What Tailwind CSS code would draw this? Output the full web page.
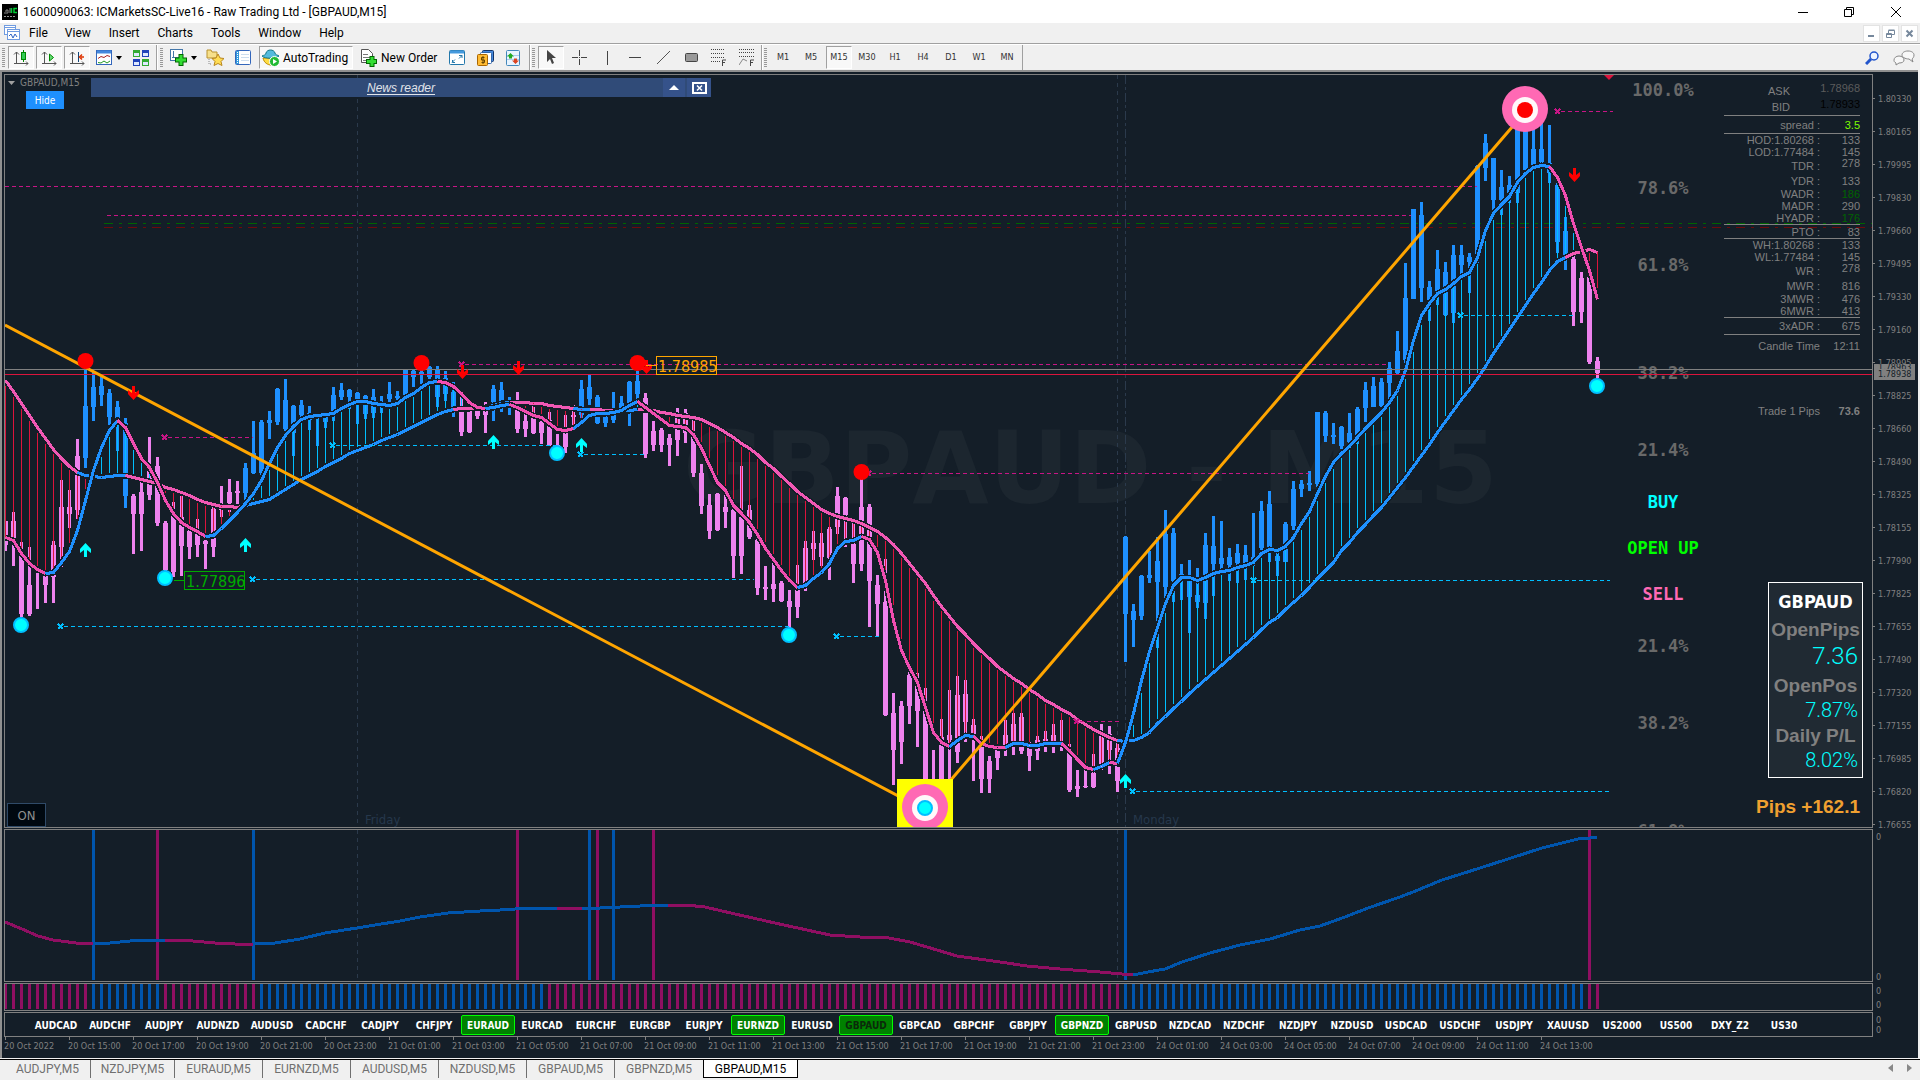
<!DOCTYPE html>
<html lang="en">
<head>
  <meta charset="UTF-8" />
  <meta name="viewport" content="width=device-width, initial-scale=1.0" />
  <title>1600090063: ICMarketsSC-Live16 - Raw Trading Ltd - [GBPAUD,M15]</title>
  <script src="https://cdn.jsdelivr.net/npm/@tailwindcss/browser@4"></script>
</head>
<body class="h-screen flex flex-col overflow-hidden bg-[#f0f0f0] text-black text-[12px] font-['Roboto','Open_Sans',sans-serif]">
  <!-- Title bar -->
  <header class="h-[23px] shrink-0 bg-white flex items-center justify-between">
    <div class="flex items-center gap-1 pl-[2px]">
      <svg width="16" height="16" viewBox="0 0 16 16"><rect width="16" height="16"/><path d="M2 9h4V6H4v2M8 4v5" stroke="#888" fill="none"/><path d="M9.500 4v5M15 4.500h-3v4h3" stroke="#0c3" stroke-width="1.500" fill="none"/><path d="M2 12.500h12" stroke="#999" stroke-dasharray="2 1"/></svg>
      <h1 class="pl-[1px] leading-4">1600090063: ICMarketsSC-Live16 - Raw Trading Ltd - [GBPAUD,M15]</h1>
    </div>
    <div class="flex">
      <button class="w-[46px] h-[22px] flex items-center justify-center" aria-label="Minimize"><svg width="10" height="10" stroke="#000"><path d="M0 5.500h10"/></svg></button>
      <button class="w-[46px] h-[22px] flex items-center justify-center" aria-label="Restore"><svg width="10" height="10" fill="none" stroke="#000"><path d="M.5 2.500h7v7h-7zM2.500 2.500v-2h7v7h-2"/></svg></button>
      <button class="w-[48px] h-[22px] flex items-center justify-center" aria-label="Close"><svg width="10" height="10" stroke="#000"><path d="M0 0l10 10M10 0L0 10"/></svg></button>
    </div>
  </header>

  <!-- Menu -->
  <nav class="h-[21px] shrink-0 flex items-center justify-between border-b border-[#a0a0a0]">
    <div class="flex items-center pl-1">
      <svg class="mr-[1px]" width="16" height="16" fill="none" stroke="#6f9be0"><rect x=".5" y=".5" width="11" height="9" fill="#fff"/><path d="M1 2.500h10"/><rect x="3.500" y="4.500" width="12" height="10" fill="#fff"/><path d="M4 6.500h11"/><path d="M5 11l2-2 2 4 2-4 2 3" stroke="#2b62c4"/></svg>
      <a href="#" class="px-[8px]">File</a>
      <a href="#" class="px-[9px]">View</a>
      <a href="#" class="px-[9px]">Insert</a>
      <a href="#" class="px-[9px]">Charts</a>
      <a href="#" class="px-[9px]">Tools</a>
      <a href="#" class="px-[9px]">Window</a>
      <a href="#" class="px-[9px]">Help</a>
    </div>
    <div class="flex gap-[2px] pr-[2px]">
      <button class="w-[17px] h-[17px] bg-white border border-[#e3e3e3] flex items-center justify-center" aria-label="Minimize chart"><svg width="9" height="9"><path d="M1 7h6" stroke="#76889c" stroke-width="2"/></svg></button>
      <button class="w-[17px] h-[17px] bg-white border border-[#e3e3e3] flex items-center justify-center" aria-label="Restore chart"><svg width="9" height="9" fill="none" stroke="#76889c"><path d="M.5 4.500h5v4h-5zM.5 5.500h5M2.500 4V1.500h6v4H6M2.500 1h6"/></svg></button>
      <button class="w-[17px] h-[17px] bg-white border border-[#e3e3e3] flex items-center justify-center" aria-label="Close chart"><svg width="9" height="9"><path d="M1.500 1.500l6 6M7.500 1.500l-6 6" stroke="#76889c" stroke-width="2"/></svg></button>
    </div>
  </nav>

  <!-- Toolbar -->
  <div class="h-[26px] shrink-0 flex items-center justify-between border-t border-white">
    <div class="flex items-center h-full">
      <div class="flex items-center h-full w-[157px] border-r border-[#a0a0a0] pl-[2px]">
        <svg class="w-[5px] shrink-0" width="5" height="20"><path d="M1.500 0v20" stroke="#999" stroke-width="3" stroke-dasharray="1 1"/></svg>
        <button class="w-[26px] h-[23px] mx-px flex items-center justify-center bg-[#f8f8f8] border border-[#a0a0a0] border-r-white border-b-white" aria-label="Candlesticks"><svg width="16" height="16" fill="none" stroke="#555"><path d="M3.500 2v12M1 4.500L3.500 2 6 4.500M1 13.500h14M13 11.500l2 2-2 2"/><path d="M10.500 0v12" stroke="#080"/><rect x="8.500" y="2.500" width="4" height="7" fill="#3c5" stroke="#080"/></svg></button>
        <button class="w-[26px] h-[23px] mx-px flex items-center justify-center bg-[#f8f8f8] border border-[#a0a0a0] border-r-white border-b-white" aria-label="Auto scroll"><svg width="16" height="16" fill="none" stroke="#555"><path d="M3.500 2v12M1 4.500L3.500 2 6 4.500M1 13.500h14M13 11.500l2 2-2 2"/><path d="M8.500 4v7l4-3.500z" fill="#6d7" stroke="#080"/></svg></button>
        <button class="w-[26px] h-[23px] mx-px flex items-center justify-center bg-[#f8f8f8] border border-[#a0a0a0] border-r-white border-b-white" aria-label="Chart shift"><svg width="16" height="16" fill="none" stroke="#555"><path d="M3.500 2v12M1 4.500L3.500 2 6 4.500M1 13.500h14M13 11.500l2 2-2 2"/><path d="M9.500 2v10" stroke="#147"/><path d="M15 7h-3M13 4.500L10.500 7 13 9.500" stroke="#d30" stroke-width="1.500"/></svg></button>
        <button class="w-9 flex items-center justify-center gap-1" aria-label="Indicators"><svg width="16" height="16" fill="none"><rect x=".5" y=".5" width="15" height="14" fill="#fff" stroke="#36b"/><path d="M1 2h14" stroke="#48d" stroke-width="3"/><path d="M2 8.500l3-2 3 1 3-2 3 1" stroke="#a22"/><path d="M2 12.500l3 .5 3-2 3 2 3-2" stroke="#292"/></svg><svg width="6" height="4"><path d="M0 0h6L3 4z"/></svg></button>
        <button class="w-7 flex justify-center" aria-label="Tile windows"><svg width="16" height="16"><path d="M0 0h7v7H0zM9 9h7v7H9z" fill="#3a3"/><path d="M9 0h7v7H9zM0 9h7v7H0z" fill="#24b"/><path d="M1 3h5v3H1zM10 3h5v3h-5zM1 12h5v3H1zM10 12h5v3h-5z" fill="#dfe9ff"/></svg></button>
      </div>
      <div class="flex items-center h-full w-[373px] border-l border-l-white border-r border-r-[#a0a0a0] pl-[2px]">
        <svg class="w-[5px] shrink-0" width="5" height="20"><path d="M1.500 0v20" stroke="#999" stroke-width="3" stroke-dasharray="1 1"/></svg>
        <button class="w-9 flex items-center justify-center gap-1" aria-label="New chart"><svg width="17" height="17" fill="none"><rect x=".5" y=".5" width="12" height="11" fill="#fff" stroke="#47a"/><path d="M3.500 2v7M2 8.500h8" stroke="#47a"/><path d="M11 5v12M5 11h12" stroke="#060" stroke-width="5"/><path d="M11 6v10M6 11h10" stroke="#3d3" stroke-width="3"/></svg><svg width="6" height="4"><path d="M0 0h6L3 4z"/></svg></button>
        <button class="w-7 flex justify-center" aria-label="Profiles"><svg width="18" height="17"><path d="M1 1h4l1 2h5v6H1z" fill="#f7e08a" stroke="#b8912e"/><path d="M3 10v5h3" fill="none" stroke="#888" stroke-dasharray="1 1"/><path d="M12 5l2 4 4 .5-3 3 1 4-4-2-4 2 1-4-3-3 4-.5z" fill="#fd5" stroke="#b8861e"/></svg></button>
        <button class="w-7 flex justify-center" aria-label="Market watch"><svg width="16" height="16"><rect x=".5" y=".5" width="15" height="14" rx="1" fill="#fff" stroke="#36b"/><path d="M1 1h3v13H1z" fill="#39d"/><path d="M2.500 2v12" stroke="#fff" stroke-dasharray="1 1"/><path d="M6 4.500h8M6 7.500h8M6 10.500h8" stroke="#cde"/></svg></button>
        <button class="w-[94px] h-[23px] ml-[2px] flex items-center gap-[3px] pl-[2px] bg-[#f8f8f8] border border-[#a0a0a0] border-r-white border-b-white whitespace-nowrap"><svg class="shrink-0" width="18" height="18"><path d="M1 9c1 5 5 7 8 7s7-3 7-7z" fill="#fd4" stroke="#b80"/><path d="M0 7c2-1 4-1 4-3 1-4 8-4 9 0 0 2 3 2 4 3-3 3-14 3-17 0z" fill="#5bd" stroke="#178"/><circle cx="12.500" cy="12.500" r="5" fill="#2b3" stroke="#fff"/><path d="M11 10v5l4-2.500z" fill="#fff"/></svg>AutoTrading</button>
        <button class="w-[90px] flex items-center gap-1 pl-2 whitespace-nowrap"><svg class="shrink-0" width="16" height="18"><path d="M.5.5h7l4 4v9H.5z" fill="#fff" stroke="#555"/><path d="M2 5.500h5M2 8.500h7M2 11.500h4" stroke="#777"/><path d="M11 7v11M5 12.500h11" stroke="#060" stroke-width="5"/><path d="M11 8v9M6 12.500h9" stroke="#3d3" stroke-width="3"/></svg>New Order</button>
        <button class="w-7 flex justify-center" aria-label="Full screen"><svg width="16" height="16"><rect x=".5" y=".5" width="15" height="14" rx="1" fill="#fff" stroke="#27a"/><path d="M1 2h14" stroke="#49d" stroke-width="3"/><path d="M3 12.500l3-3M3.500 10v2.500H6M13 5.500l-3 3M10 5.500h3V8" stroke="#27a" fill="none"/></svg></button>
        <button class="w-7 flex justify-center" aria-label="Options"><svg width="17" height="16"><rect x="5.500" y=".5" width="11" height="11" rx="1" fill="#48d" stroke="#136"/><rect x="3.500" y="2.500" width="11" height="11" rx="1" fill="#fff" stroke="#36a"/><rect x=".5" y="4.500" width="10" height="11" rx="1" fill="#fb3" stroke="#a60"/><path d="M7.500 7.500h-3v2.500h3v2.500h-3M6 6v8" fill="none" stroke="#640"/></svg></button>
        <button class="w-7 flex justify-center" aria-label="Tester"><svg width="14" height="16"><rect x=".5" y=".5" width="13" height="15" rx="1" fill="#e8f4ff" stroke="#48b"/><path d="M1 5.500h12M1 9.500h12" stroke="#ace"/><path d="M4.500 3L8 6.500H6v2H3v-2H1z" fill="#2a2"/><path d="M9.500 14L6 10.500h2v-2h3v2h2z" fill="#d42"/></svg></button>
      </div>
      <div class="flex items-center h-full w-[232px] border-l border-l-white border-r border-r-[#a0a0a0] pl-px">
        <svg class="w-[5px] shrink-0" width="5" height="20"><path d="M1.500 0v20" stroke="#999" stroke-width="3" stroke-dasharray="1 1"/></svg>
        <button class="w-[26px] h-[23px] mx-px flex items-center justify-center bg-[#f8f8f8] border border-[#a0a0a0] border-r-white border-b-white" aria-label="Cursor"><svg width="10" height="16"><path d="M1 0v12l3-3 2 5 2-1-2-5h4z" fill="#444"/></svg></button>
        <button class="w-7 flex justify-center" aria-label="Crosshair"><svg width="15" height="15" stroke="#444"><path d="M7.500 0v6M7.500 9v6M0 7.500h6M9 7.500h6M7 7.500h1"/></svg></button>
        <button class="w-7 flex justify-center" aria-label="Vertical line"><svg width="3" height="14" stroke="#444"><path d="M1.500 0v14"/></svg></button>
        <button class="w-7 flex justify-center" aria-label="Horizontal line"><svg width="12" height="3" stroke="#444"><path d="M0 1.500h12"/></svg></button>
        <button class="w-7 flex justify-center" aria-label="Trendline"><svg width="13" height="13" stroke="#555"><path d="M0 13L13 0"/></svg></button>
        <button class="w-7 flex justify-center" aria-label="Rectangle"><svg width="13" height="9"><rect x=".5" y=".5" width="12" height="8" rx="1" fill="#999" stroke="#444"/></svg></button>
        <button class="w-7 flex justify-center" aria-label="Fibonacci retracement"><svg width="16" height="17" stroke="#444" fill="none"><path d="M0 .5h14M0 4.500h14M0 8.500h14M0 12.500h9" stroke-dasharray="1 1"/><path d="M11.500 17v-6H15M11 13.500h3"/></svg></button>
        <button class="w-7 flex justify-center" aria-label="Fibonacci fan"><svg width="16" height="17" stroke="#444" fill="none"><path d="M0 .5h15M0 3.500h15M0 7.500h15" stroke-dasharray="1 1"/><path d="M0 16l4-6 4 2" stroke="#888"/><path d="M11.500 17v-6H15M11 13.500h3"/></svg></button>
      </div>
      <div class="flex items-center h-full w-[261px] border-l border-l-white border-r border-r-[#a0a0a0] pl-px text-[9px] text-[#333] font-['DejaVu_Sans_Condensed','DejaVu_Sans',sans-serif]">
        <svg class="w-[5px] shrink-0" width="5" height="20"><path d="M1.500 0v20" stroke="#999" stroke-width="3" stroke-dasharray="1 1"/></svg>
        <button class="w-7">M1</button>
        <button class="w-7">M5</button>
        <button class="w-[26px] h-[23px] mx-px bg-[#f8f8f8] border border-[#a0a0a0] border-r-white border-b-white">M15</button>
        <button class="w-7">M30</button>
        <button class="w-7">H1</button>
        <button class="w-7">H4</button>
        <button class="w-7">D1</button>
        <button class="w-7">W1</button>
        <button class="w-7">MN</button>
      </div>
    </div>
    <div class="flex items-center gap-[14px] pr-[5px]">
      <button aria-label="Search"><svg width="14" height="14" fill="none"><path d="M1 13l5-5" stroke="#25c" stroke-width="3"/><circle cx="9" cy="5" r="4" fill="#eef4ff" stroke="#25c" stroke-width="1.500"/></svg></button>
      <button aria-label="Chat"><svg width="22" height="16" fill="#f8f8f8" stroke="#888"><path d="M15 1c4 0 6 2 6 4s-1 3-2 4l1 3-4-3c-4 0-7-2-7-4s2-4 6-4z"/><path d="M6 6c3 0 5 2 5 4s-2 3-5 3l-3 2v-2c-2-1-2-2-2-3 0-2 2-4 5-4z"/></svg></button>
    </div>
  </div>

  <!-- Chart window -->
  <main class="flex-1 min-h-0 mr-[2px] border-l-2 border-t-2 border-[#909090] bg-[#141e28] pt-[2px] pl-[2px] flex text-[#808080]">
    <div class="flex-1 min-w-0 flex flex-col gap-px">
      <!-- Price panel -->
      <section class="relative flex-1 min-h-0 border border-[#808080] overflow-hidden">
        <svg id="priceChart" class="absolute inset-0 w-full h-full"></svg>

        <div class="absolute left-[3px] top-[2px] flex items-center gap-[5px] text-[10px] leading-3 font-['DejaVu_Sans_Condensed','DejaVu_Sans',sans-serif]">
          <svg width="7" height="4"><path d="M0 0h7L3.500 4z" fill="#a0a0a0"/></svg>GBPAUD,M15
        </div>
        <button class="absolute left-[21px] top-4 w-[38px] h-[18px] bg-[#1e90ff] text-white text-[10px] font-['DejaVu_Sans_Condensed','DejaVu_Sans',sans-serif]">Hide</button>

        <div class="absolute left-[86px] top-[3px] w-[620px] h-[19px] bg-[#304b78] flex items-center justify-center text-[#e0e4ea] font-['Liberation_Sans',Arial,sans-serif]">
          <span class="italic underline underline-offset-2">News reader</span>
          <div class="absolute right-0 top-0 h-full flex gap-[2px]">
            <button class="w-[22px] bg-[#35528a] flex items-center justify-center" aria-label="Collapse"><svg width="10" height="5"><path d="M0 5h10L5 0z" fill="#fff"/></svg></button>
            <button class="w-[24px] bg-[#35528a] flex items-center justify-center" aria-label="Close news"><svg width="15" height="12" fill="none" stroke="#fff"><rect x="1" y="1" width="13" height="10" stroke-width="2"/><path d="M5 3.500l5 5M10 3.500l-5 5" stroke-width="1.500"/></svg></button>
          </div>
        </div>

        <button class="absolute left-[2px] bottom-0 w-[39px] h-6 bg-[#000810] border border-[#2f4a68] text-[#909090] text-[13px] leading-none font-['DejaVu_Sans_Condensed','DejaVu_Sans',sans-serif]">ON</button>

        <!-- Market information -->
        <div class="absolute right-3 top-[7px] w-[136px] text-[11px] leading-3 font-['Liberation_Sans',Arial,sans-serif]">
          <div class="flex justify-end items-start h-4">
            <span class="w-[66px] text-right pt-[3px]">ASK</span><span class="w-[70px] text-right text-[#5c5c5c]">1.78968</span>
          </div>
          <div class="flex justify-end items-start h-[17px]">
            <span class="w-[66px] text-right pt-[3px]">BID</span><span class="w-[70px] text-right text-black">1.78933</span>
          </div>
          <table class="w-full text-right border-collapse leading-[10px]">
            <tbody id="ranges"></tbody>
          </table>
          <div class="flex border-t border-[#808080] pt-[5px]">
            <span class="w-24 text-right">Candle Time</span><span class="w-10 text-right">12:11</span>
          </div>
          <div class="flex pt-[53px]">
            <span class="w-24 text-right">Trade 1 Pips</span><span class="w-10 text-right font-bold">73.6</span>
          </div>
        </div>

        <!-- Position summary -->
        <div class="absolute right-[9px] bottom-[49px] w-[95px] h-[196px] border border-white bg-[#202a33] px-1 pt-1 text-[19px] leading-6 text-right font-bold font-['Liberation_Sans',Arial,sans-serif]">
          <p class="h-[31px] text-[18px] leading-[30px] text-center text-white font-['DejaVu_Sans_Condensed','DejaVu_Sans',sans-serif]">GBPAUD</p>
          <p class="-mx-1 text-center">OpenPips</p>
          <p class="h-8 text-[24px] leading-7 font-light text-[#00ffff] font-['Roboto',sans-serif]">7.36</p>
          <p class="text-center">OpenPos</p>
          <p class="h-[26px] text-[20px] leading-6 font-light text-[#00ffff] font-['Roboto',sans-serif]">7.87%</p>
          <p class="text-center">Daily P/L</p>
          <p class="text-[20px] leading-6 font-light text-[#00ffff] font-['Roboto',sans-serif]">8.02%</p>
        </div>
        <p class="absolute right-3 bottom-2 text-[19px] leading-6 font-bold text-[#f0a030] font-['Liberation_Sans',Arial,sans-serif]">Pips +162.1</p>
      </section>

      <!-- Trend line panel -->
      <section class="h-[153px] shrink-0 border border-[#808080]">
        <svg id="trendChart" class="block w-full h-full"></svg>
      </section>

      <!-- Trend histogram -->
      <section class="h-7 shrink-0 border border-[#808080]">
        <svg id="trendBars" class="block w-full h-full"></svg>
      </section>

      <!-- Symbols -->
      <section id="symbols" class="h-[25px] shrink-0 border border-[#808080] pl-6 pt-px flex items-center text-white text-[10px] font-bold font-['DejaVu_Sans_Condensed','DejaVu_Sans',sans-serif]"></section>

      <div id="timeAxis" class="-mt-px h-[21px] shrink-0 flex text-[9px] leading-3 whitespace-nowrap overflow-hidden font-['DejaVu_Sans_Condensed','DejaVu_Sans',sans-serif]"></div>
    </div>

    <!-- Price axis -->
    <aside class="w-[45px] shrink-0 flex flex-col text-[9px] leading-3 font-['DejaVu_Sans_Condensed','DejaVu_Sans',sans-serif]">
      <div class="relative flex-1 min-h-0 overflow-hidden pt-2">
        <div id="priceAxis"></div>
        <div class="absolute left-px top-[290px] w-[41px] h-4 bg-[#808080] text-[#141e28] pl-1 overflow-hidden">
          <p class="h-[5px] leading-[6px] overflow-hidden">1.78963</p>
          <p class="leading-[11px]">1.78938</p>
        </div>
      </div>
      <div class="h-[154px] shrink-0 pl-[3px] pt-[2px] flex flex-col justify-between"><p>0</p><p>0</p></div>
      <div class="h-7 shrink-0 pl-[3px] pt-[2px] flex flex-col justify-between"><p>0</p><p>0</p></div>
      <div class="h-[25px] shrink-0 pl-[3px] pt-[4px] leading-[10px]"><p>0</p><p>0</p></div>
      <div class="h-[22px] shrink-0"></div>
    </aside>
  </main>

  <!-- Chart tabs -->
  <footer class="h-[21px] shrink-0 flex justify-between border-t border-t-black bg-[#f0f0f0] text-[#707070] mt-px">
    <div class="flex pl-[5px]">
      <a href="#" class="w-[86px] h-[18px] text-center leading-[18px] border-r border-[#707070]">AUDJPY,M5</a>
      <a href="#" class="w-[84px] h-[18px] text-center leading-[18px] border-r border-[#707070]">NZDJPY,M5</a>
      <a href="#" class="w-[88px] h-[18px] text-center leading-[18px] border-r border-[#707070]">EURAUD,M5</a>
      <a href="#" class="w-[88px] h-[18px] text-center leading-[18px] border-r border-[#707070]">EURNZD,M5</a>
      <a href="#" class="w-[88px] h-[18px] text-center leading-[18px] border-r border-[#707070]">AUDUSD,M5</a>
      <a href="#" class="w-[88px] h-[18px] text-center leading-[18px] border-r border-[#707070]">NZDUSD,M5</a>
      <a href="#" class="w-[88px] h-[18px] text-center leading-[18px] border-r border-[#707070]">GBPAUD,M5</a>
      <a href="#" class="w-[88px] h-[18px] text-center leading-[18px]">GBPNZD,M5</a>
      <a href="#" class="w-[95px] h-[18px] text-center leading-[18px] bg-white text-black border border-t-0 border-black">GBPAUD,M15</a>
    </div>
    <div class="flex items-center gap-[14px] pr-2 pb-1">
      <button aria-label="Previous tab"><svg width="5" height="8"><path d="M5 0v8L0 4z" fill="#888"/></svg></button>
      <button aria-label="Next tab"><svg width="5" height="8"><path d="M0 0v8l5-4z" fill="#888"/></svg></button>
    </div>
  </footer>

  <script>
    const BLUE = "#1e90ff", VIOLET = "#ee82ee", BG = "#141e28";
    const barX = (i) => 5 + i * 8;

    // high, body top, body bottom, low
    const candles = [
      [521,521,545,551],[512,521,538,566],[542,556,614,617],[547,585,614,616],[573,586,586,609],[575,576,585,603],[541,545,577,603],[480,507,547,567],[490,507,514,528],[439,456,510,519],
      [369,406,458,468],[372,387,407,421],[377,386,395,406],[389,393,417,425],[401,407,420,451],[418,423,496,508],[494,496,514,554],[481,492,514,551],[437,471,495,500],[457,466,523,526],
      [521,523,570,572],[502,515,572,577],[496,517,546,576],[529,531,547,559],[519,534,545,557],[540,541,544,569],[507,509,547,557],[486,508,510,517],[479,492,503,512],[481,491,493,504],
      [463,468,493,500],[421,453,473,474],[420,422,473,475],[411,420,423,439],[388,389,422,425],[379,400,429,431],[405,406,433,456],[400,405,415,417],[406,413,420,430],[417,417,417,446],
      [412,417,422,428],[387,395,415,421],[383,390,397,400],[389,390,397,409],[392,393,405,424],[395,396,414,419],[389,397,413,418],[396,402,407,413],[382,394,399,402],[391,396,398,400],
      [369,370,395,397],[370,371,377,387],[370,372,375,384],[366,367,377,379],[366,369,397,407],[371,378,394,401],[382,392,407,417],[397,412,432,436],[406,411,432,433],[410,410,416,419],
      [402,411,415,433],[385,389,402,421],[382,390,401,412],[397,398,398,415],[392,410,429,433],[413,421,429,437],[404,417,433,434],[420,422,433,444],[412,420,445,446],[434,445,447,447],
      [415,433,447,453],[405,415,417,426],[380,389,415,418],[374,387,399,405],[395,397,423,424],[416,417,423,427],[392,408,420,423],[396,403,409,413],[381,382,407,426],[371,381,394,399],
      [393,398,454,458],[421,431,445,451],[428,430,445,452],[434,438,445,466],[408,417,440,456],[409,413,433,443],[418,432,473,477],[464,473,506,514],[494,505,531,539],[493,494,530,531],
      [494,507,512,528],[508,510,556,578],[466,517,556,574],[505,510,537,539],[537,540,588,595],[566,587,589,600],[562,584,589,602],[581,583,601,602],[590,601,607,630],[565,590,607,618],
      [541,548,587,591],[531,543,549,560],[533,543,557,566],[527,529,558,580],[487,496,527,534],[497,498,515,547],[523,544,564,583],[477,507,564,571],[504,507,581,627],[575,585,604,637],
      [559,602,715,716],[693,713,750,785],[701,706,742,764],[670,675,706,724],[673,683,711,747],[688,705,779,779],[750,779,779,779],[719,737,779,779],[690,735,740,779],[676,695,752,763],
      [680,694,722,742],[719,725,735,781],[736,745,779,793],[756,761,779,793],[748,750,758,770],[720,735,750,756],[713,724,742,755],[713,717,751,754],[742,748,756,771],[736,740,751,760],
      [731,739,742,752],[724,735,747,753],[720,747,747,751],[744,748,790,792],[770,786,789,797],[770,786,787,788],[754,773,787,788],[724,735,766,770],[726,734,750,774],[743,748,781,792],
      [536,537,614,662],[604,611,620,647],[575,576,616,620],[551,575,578,583],[537,561,582,648],[510,534,587,598],[528,533,581,602],[564,574,577,600],[560,580,597,633],[568,595,602,608],
      [533,545,603,619],[516,546,564,596],[521,558,564,569],[548,557,565,581],[544,553,563,583],[545,555,563,580],[513,557,563,566],[501,511,548,550],[491,504,547,562],[551,556,561,576],
      [522,524,562,562],[481,489,526,530],[480,484,489,497],[471,483,485,491],[412,412,484,487],[411,413,436,442],[423,435,437,444],[426,427,446,449],[413,433,442,443],[407,409,438,444],
      [382,390,408,422],[377,386,407,407],[378,382,406,407],[362,368,383,400],[331,351,373,375],[263,298,360,365],[209,209,299,299],[202,215,288,302],[281,287,300,321],[250,269,295,305],
      [262,272,315,316],[245,255,313,323],[245,255,265,274],[253,257,262,293],[165,166,258,263],[134,143,168,181],[158,158,200,212],[170,187,200,215],[176,185,193,203],[125,125,193,203],
      [125,125,170,172],[125,149,165,168],[120,149,162,165],[125,163,173,183],[181,185,242,253],[217,231,260,270],[256,259,312,326],[272,278,312,323],[275,277,362,364],[357,361,373,378]
    ];
    // bars on which the candle colour flips, starting with violet
    const candleFlips = [10, 16, 30, 57, 61, 64, 72, 80, 140, 196];

    const fast = [
      537,540,553,563,569,573,572,562,551,530,500,470,447,430,420,427,443,458,467,482,
      500,513,522,527,531,536,535,528,520,512,503,493,480,463,447,435,426,419,416,415,
      414,413,408,404,401,401,403,404,405,403,397,393,387,382,381,382,386,393,402,407,
      408,407,405,404,407,411,415,417,423,429,430,428,422,415,413,413,412,410,405,401,
      407,413,419,425,426,427,434,448,465,482,490,505,513,522,534,548,559,570,580,587,
      585,578,572,563,548,541,540,536,539,552,580,620,650,667,682,707,732,742,746,740,
      735,736,743,746,747,747,743,743,745,745,743,743,743,750,759,767,769,766,762,763,
      742,713,680,651,627,603,585,577,577,580,577,573,571,570,567,565,562,553,549,550,
      546,537,523,511,493,476,462,453,446,437,428,420,412,402,390,370,340,315,303,293,
      289,283,276,272,257,230,213,204,196,182,173,167,165,166,177,195,223,247,270,299
    ];
    const fastFlips = [5, 14, 25, 54, 60, 63, 71, 79, 99, 107, 118, 121, 125, 132, 136, 138, 139, 193];

    const slow = [
      380,391,403,415,427,438,449,458,466,472,475,476,477,476,475,475,477,479,481,483,
      487,489,492,495,499,502,504,506,506,507,505,503,501,499,494,489,484,479,475,471,
      466,462,458,453,450,447,444,440,437,434,430,426,422,418,414,411,409,408,408,407,
      407,405,403,402,402,402,403,403,405,406,407,408,409,409,409,410,410,410,410,409,
      409,410,412,413,415,416,417,419,423,427,432,437,443,448,454,462,468,476,483,491,
      497,503,509,513,516,518,520,523,527,531,537,544,553,563,573,583,595,606,616,626,
      634,643,651,658,666,672,678,683,689,694,700,704,709,713,719,724,729,733,737,740,
      741,740,737,732,723,716,708,701,693,686,679,672,665,658,651,644,637,629,622,617,
      609,602,595,587,578,570,562,550,542,532,524,515,507,497,487,477,466,455,444,432,
      421,410,399,389,378,366,353,341,329,317,305,293,282,270,261,257,253,251,249,252
    ];
    const slowFlips = [9, 15, 30, 56, 60, 63, 71, 73, 76, 79, 139, 195];

    // x1, x2, y, colour, marker at the start
    const levels = [
      [5,1477,186,"#c71585",false],[107,1411,215,"#c71585",false],[1557,1613,111,"#c71585",true],[164,253,437,"#c71585",true],
      [461,1389,364,"#c71585",true],[868,1309,473,"#c71585",true],[1076,1122,721,"#c71585",true],
      [332,557,445,"#00bfff",true],[252,754,579,"#00bfff",true],[60,790,626,"#00bfff",true],[580,645,454,"#00bfff",true],
      [836,882,636,"#00bfff",true],[1253,1610,580,"#00bfff",true],[1132,1610,791,"#00bfff",true],[1460,1573,315,"#00bfff",true]
    ];

    const line = (x1, y1, x2, y2, color, width = 1, dash = "") =>
      `<line x1="${x1}" y1="${y1}" x2="${x2}" y2="${y2}" stroke="${color}" stroke-width="${width}" stroke-dasharray="${dash}"/>`;

    // splits an average into runs of falling and rising colour
    function average(values, flips, falling, rising) {
      const stops = [0, ...flips, values.length - 1];
      const points = (a, b) => values.slice(a, b + 1).map((y, i) => `${barX(a + i) + 0.5},${y + 0.5}`).join(" ");
      let out = `<polyline points="${points(0, values.length)}" fill="none" stroke="${BG}" stroke-width="6"/>`;
      for (let i = 0; i < stops.length - 1; i++) {
        out += `<polyline points="${points(stops[i], stops[i + 1])}" fill="none" stroke="${i % 2 ? rising : falling}" stroke-width="3"/>`;
      }
      return out;
    }

    const arrowDown = (x, y) => `<path d="M${x - 1} ${y - 7}h3v7l4-3v4l-5.500 6-5.500-6v-4l4 3z" fill="#f00"/>`;
    const arrowUp = (x, y) => `<path d="M${x - 1} ${y + 6}h3v-7l4 3v-4l-5.500-6-5.500 6v4l4-3z" fill="#0ff"/>`;
    const redDot = ([x, y]) => `<circle cx="${x + 0.5}" cy="${y}" r="8" fill="#f00"/>`;
    const cyanDot = ([x, y]) => `<circle cx="${x}" cy="${y}" r="7" fill="#0ff" stroke="#00bfff" stroke-width="2"/>`;

    function drawPrice() {
      let s = `<text class="[font-kerning:none]" x="683" y="503" font-size="99" font-weight="bold" font-family="DejaVu Sans" fill="#1c262f">GBPAUD - M15</text>`;

      const zones = [["100.0%",90],["78.6%",188],["61.8%",265],["38.2%",373],["21.4%",450],["BUY",502,"#0ff"],["OPEN UP",548,"#0f0"],["SELL",594,"#ff69b4"],["21.4%",646],["38.2%",723],["61.8%",831]];
      zones.forEach(([label, y, color]) => {
        s += `<text x="1663" y="${y + 6}" text-anchor="middle" font-size="17" font-weight="bold" font-family="DejaVu Sans Mono" fill="${color || "#696969"}">${label}</text>`;
      });
      s += `<text x="365" y="824" font-size="13" font-family="DejaVu Sans Condensed, DejaVu Sans" fill="#26384c">Friday</text>`;
      s += `<text x="1133" y="824" font-size="13" font-family="DejaVu Sans Condensed, DejaVu Sans" fill="#26384c">Monday</text>`;

      s += `<g shape-rendering="crispEdges">`;
      s += line(357.5, 75, 357.5, 828, "#2b3a4c", 1, "4 4") + line(1117.5, 75, 1117.5, 828, "#2b3a4c", 1, "4 4") + line(1125.5, 75, 1125.5, 828, "#2b3a4c", 1, "9 3 3 3");
      s += line(104, 223.5, 1873, 223.5, "#006400", 1, "9 6 3 6") + line(104, 227.5, 1873, 227.5, "#6e0a0a", 1, "9 6 3 6");

      let color = VIOLET;
      candles.forEach(([high, top, bottom, low], i) => {
        if (candleFlips.includes(i)) color = color === VIOLET ? BLUE : VIOLET;
        const x = barX(i);
        s += `<rect x="${x - 1}" y="${high}" width="3" height="${low - high}" fill="${color}"/>`;
        s += `<rect x="${x - 2}" y="${top}" width="5" height="${bottom - top}" fill="${color}"/>`;
      });
      fast.forEach((y, i) => {
        s += line(barX(i) + 0.5, y, barX(i) + 0.5, slow[i], y > slow[i] ? "#dc143c" : "#00bfff");
      });
      s += average(slow, slowFlips, "#f158b4", BLUE);
      s += average(fast, fastFlips, "#f04db0", BLUE);

      levels.forEach(([x1, x2, y, c, marker]) => {
        s += line(marker ? x1 + 4 : x1, y + 0.5, x2, y + 0.5, c, 1, "4 3");
        if (marker) s += `<path d="M${x1 - 2} ${y - 2}l5 5m0-5l-5 5" stroke="${c}" stroke-width="2"/>`;
      });
      s += line(5, 369.5, 1873, 369.5, "#808080") + line(5, 374.5, 1873, 374.5, "#dc143c");
      s += `</g>`;

      s += `<polyline points="5,325 925,810 1525,112" fill="none" stroke="#ffa500" stroke-width="3"/>`;
      s += [[133,393],[462,372],[518,368],[646,367],[1574,175]].map(([x, y]) => arrowDown(x, y)).join("");
      s += [[85,551],[245,546],[493,443],[581,446],[1125,782]].map(([x, y]) => arrowUp(x, y)).join("");
      s += [[85,361],[421,363],[637,363],[861,472]].map(redDot).join("");
      s += [[21,625],[165,578],[557,453],[789,635],[1597,386]].map(cyanDot).join("");

      s += `<circle cx="1525" cy="109" r="23" fill="#ff69b4"/><circle cx="1525" cy="110" r="13" fill="#fff8fa"/><circle cx="1525" cy="110" r="8" fill="#f00"/>`;
      s += `<rect x="897" y="779" width="56" height="49" fill="#ff0"/><circle cx="925" cy="807" r="23" fill="#ff69b4"/><circle cx="925" cy="808" r="13" fill="#fff8fa"/>` + cyanDot([925, 808]);

      s += line(646, 365.5, 656, 365.5, "#ffa500") + `<rect x="656.5" y="356.5" width="60" height="18" fill="none" stroke="#ffa500"/><text x="658" y="372" font-size="16" font-family="DejaVu Sans Condensed, DejaVu Sans" fill="#ffa500">1.78985</text>`;
      s += line(174, 580.5, 184, 580.5, "#0a0") + `<rect x="184.500" y="571.500" width="60" height="18" fill="none" stroke="#0a0"/><text x="186" y="587" font-size="16" font-family="DejaVu Sans Condensed, DejaVu Sans" fill="#0a0">1.77896</text>`;
      s += `<path d="M1604 75h10l-5 5z" fill="#dc143c"/>`;

      document.getElementById("priceChart").innerHTML = `<g transform="translate(-5 -75)">${s}</g>`;
    }

    function drawTrend() {
      const pink = "#8f0f62", blue = "#0055ad";
      const runs = [
        [pink, "5,923 22,930 38,937 53,941 76,944 93,945"],
        [blue, "93,945 110,944 130,942 150,941 165,941"],
        [pink, "165,941 193,942 215,944 235,945 253,945"],
        [blue, "253,945 275,944 300,940 325,934 357,929 375,926 400,922 420,918 448,914 480,912 500,911 530,909 557,909"],
        [pink, "557,909 582,909"],
        [blue, "582,909 600,909 640,907 668,906"],
        [pink, "668,906 686,906 705,908 735,915 784,926 830,936 860,938 889,939 910,943 937,951 957,957 1000,963 1027,967 1060,970 1100,973 1133,976"],
        [blue, "1133,976 1148,973 1165,970 1182,963 1210,954 1240,946 1270,940 1300,931 1320,927 1345,918 1368,909 1400,898 1413,893 1442,881 1480,869 1508,860 1542,849 1578,840 1590,839 1597,838"]
      ];
      let s = line(357.5, 831, 357.5, 982, "#2b3a4c", 1, "4 4") + line(1117.5, 831, 1117.5, 982, "#2b3a4c", 1, "4 4");
      [[93,blue],[157,pink],[253,blue],[517,pink],[589,blue],[597,pink],[613,blue],[653,pink],[1125,blue],[1589,pink]].forEach(([x, c]) => {
        s += line(x + 0.5, 831, x + 0.5, 981, c, 3);
      });
      runs.forEach(([c, points]) => {
        s += `<polyline points="${points}" fill="none" stroke="${c}" stroke-width="3"/>`;
      });
      document.getElementById("trendChart").innerHTML = `<g transform="translate(-5 -831)" shape-rendering="crispEdges">${s}</g>`;

      const flips = [11, 20, 32, 68, 140, 198];
      let bars = "", color = pink;
      for (let i = 0; i < 200; i++) {
        if (flips.includes(i)) color = color === pink ? blue : pink;
        bars += `<rect x="${barX(i) - 6}" y="0" width="3" height="25" fill="${color}"/>`;
      }
      document.getElementById("trendBars").innerHTML = bars;
    }

    function fillSymbols() {
      const symbols = ["AUDCAD","AUDCHF","AUDJPY","AUDNZD","AUDUSD","CADCHF","CADJPY","CHFJPY","EURAUD","EURCAD","EURCHF","EURGBP","EURJPY","EURNZD","EURUSD","GBPAUD","GBPCAD","GBPCHF","GBPJPY","GBPNZD","GBPUSD","NZDCAD","NZDCHF","NZDJPY","NZDUSD","USDCAD","USDCHF","USDJPY","XAUUSD","US2000","US500","DXY_Z2","US30"];
      const open = ["EURAUD", "EURNZD", "GBPAUD", "GBPNZD"];
      document.getElementById("symbols").innerHTML = symbols.map((name) => {
        const state = open.includes(name) ? "bg-[#008000] border border-[#00ff00] rounded-xs" : "";
        const text = name === "GBPAUD" ? "text-[#0a2a0a]" : "text-white";
        return `<button class="w-[54px] h-5 shrink-0 ${state} ${text}">${name}</button>`;
      }).join("");
    }

    function fillAxes() {
      const prices = ["1.80330","1.80165","1.79995","1.79830","1.79660","1.79495","1.79330","1.79160","1.78995","1.78825","1.78660","1.78490","1.78325","1.78155","1.77990","1.77825","1.77655","1.77490","1.77320","1.77155","1.76985","1.76820","1.76655"];
      document.getElementById("priceAxis").innerHTML = prices.map((p) =>
        `<div class="h-[33px] flex items-center gap-[3px]"><span class="w-[2px] h-px bg-[#808080]"></span>${p}</div>`).join("");

      const times = ["20 Oct 2022"];
      ["15","17","19","21","23"].forEach((h) => times.push(`20 Oct ${h}:00`));
      ["01","03","05","07","09","11","13","15","17","19","21","23"].forEach((h) => times.push(`21 Oct ${h}:00`));
      ["01","03","05","07","09","11","13"].forEach((h) => times.push(`24 Oct ${h}:00`));
      document.getElementById("timeAxis").innerHTML = times.map((t) =>
        `<div class="w-16 shrink-0"><span class="block ml-px w-px h-[3px] bg-[#808080]"></span>${t}</div>`).join("");
    }

    // label, value, row height class, first row of a ruled block, value colour
    function fillRanges() {
      const rows = [
        ["spread", "3.5", "h-[18px]", true, "text-[#7cfc00]"],
        ["HOD:1.80268", "133", "h-[13px]", true],
        ["LOD:1.77484", "145", "h-[11px]"],
        ["TDR", "278", "h-4"],
        ["YDR", "133", "h-[14px]"],
        ["WADR", "186", "h-3", false, "text-[#006400]"],
        ["MADR", "290", "h-3"],
        ["HYADR", "176", "h-[13px]", false, "text-[#006400]"],
        ["PTO", "83", "h-[14px]", true],
        ["WH:1.80268", "133", "h-[13px]", true],
        ["WL:1.77484", "145", "h-[11px]"],
        ["WR", "278", "h-4"],
        ["MWR", "816", "h-[14px]"],
        ["3MWR", "476", "h-3"],
        ["6MWR", "413", "h-[13px]"],
        ["3xADR", "675", "h-4", true]
      ];
      document.getElementById("ranges").innerHTML = rows.map(([label, value, height, ruled, color]) => `
        <tr class="${height} ${ruled ? "border-t border-[#808080]" : ""}">
          <td class="w-24 p-0 align-middle">${label} :</td>
          <td class="w-10 p-0 ${value === "278" ? "align-top" : "align-middle"} ${color || ""}">${value}</td>
        </tr>`).join("");
    }

    drawPrice();
    drawTrend();
    fillSymbols();
    fillAxes();
    fillRanges();
  </script>
</body>
</html>
